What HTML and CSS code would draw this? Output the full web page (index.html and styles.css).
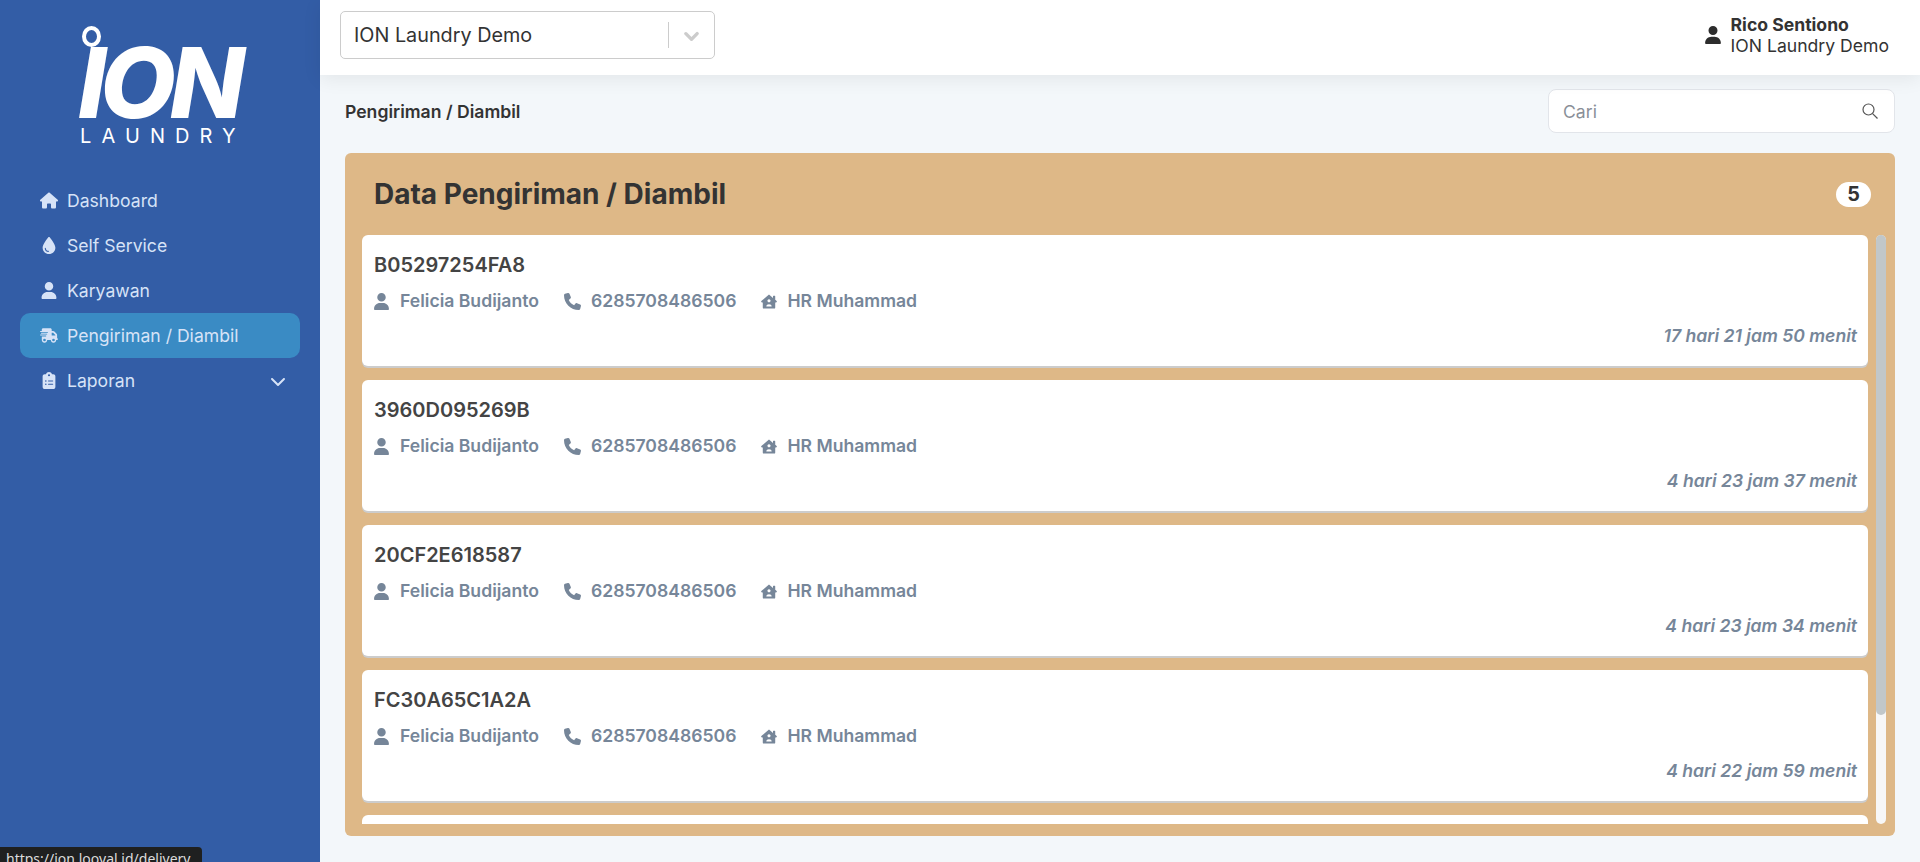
FILE: index.html
```html
<!DOCTYPE html>
<html lang="en">
<head>
    <meta charset="UTF-8">
    <meta name="viewport" content="width=device-width, initial-scale=1.0">
    <title>Pengiriman / Diambil</title>
    <link rel="stylesheet" href="styles.css">
</head>
<body>
    <svg class="sprite" aria-hidden="true">
        <symbol id="i-house" viewBox="0 0 576 512"><path d="M575.8 255.5c0 18-15 32.1-32 32.1h-32l.7 160.2c0 2.7-.2 5.4-.5 8.1V472c0 22.1-17.9 40-40 40H456c-1.1 0-2.2 0-3.3-.1c-1.4 .1-2.8 .1-4.2 .1H416 392c-22.1 0-40-17.9-40-40V448 384c0-17.7-14.3-32-32-32H256c-17.7 0-32 14.3-32 32v64 24c0 22.1-17.9 40-40 40H160 128.1c-1.5 0-3-.1-4.5-.2c-1.2 .1-2.4 .2-3.6 .2H104c-22.1 0-40-17.9-40-40V360c0-.9 0-1.9 .1-2.8V287.6H32c-18 0-32-14-32-32.1c0-9 3-17 10-24L266.4 8c7-7 15-8 22-8s15 2 21 7L564.8 231.5c8 7 12 15 11 24z"/></symbol>
        <symbol id="i-drop" viewBox="0 0 384 512"><path d="M192 512C86 512 0 426 0 320C0 228.8 130.2 57.7 166.6 11.7C172.6 4.2 181.5 0 191.1 0h1.8c9.6 0 18.5 4.2 24.5 11.7C253.8 57.7 384 228.8 384 320c0 106-86 192-192 192zM96 336c0-8.8-7.2-16-16-16s-16 7.2-16 16c0 61.9 50.1 112 112 112c8.8 0 16-7.2 16-16s-7.2-16-16-16c-44.2 0-80-35.8-80-80z"/></symbol>
        <symbol id="i-user" viewBox="0 0 448 512"><path d="M224 256A128 128 0 1 0 224 0a128 128 0 1 0 0 256zm-45.7 48C79.8 304 0 383.8 0 482.3C0 498.7 13.3 512 29.7 512H418.3c16.4 0 29.7-13.3 29.7-29.7C448 383.8 368.2 304 269.7 304H178.3z"/></symbol>
        <symbol id="i-truck" viewBox="0 0 640 512"><path d="M112 0C85.5 0 64 21.5 64 48V96H16c-8.8 0-16 7.2-16 16s7.2 16 16 16H64 272c8.8 0 16 7.2 16 16s-7.2 16-16 16H64 48c-8.8 0-16 7.2-16 16s7.2 16 16 16H64 240c8.8 0 16 7.2 16 16s-7.2 16-16 16H64 16c-8.8 0-16 7.2-16 16s7.2 16 16 16H64 208c8.8 0 16 7.2 16 16s-7.2 16-16 16H64V416c0 53 43 96 96 96s96-43 96-96H384c0 53 43 96 96 96s96-43 96-96h32c17.7 0 32-14.3 32-32s-14.3-32-32-32V288 256 237.3c0-17-6.7-33.3-18.7-45.3L512 114.7c-12-12-28.3-18.7-45.3-18.7H416V48c0-26.5-21.5-48-48-48H112zM544 237.3V256H416V160h50.7L544 237.3zM160 368a48 48 0 1 1 0 96 48 48 0 1 1 0-96zm272 48a48 48 0 1 1 96 0 48 48 0 1 1 -96 0z"/></symbol>
        <symbol id="i-clipboard" viewBox="0 0 384 512"><path d="M192 0c-41.8 0-77.4 26.7-90.5 64H64C28.7 64 0 92.7 0 128V448c0 35.3 28.7 64 64 64H320c35.3 0 64-28.7 64-64V128c0-35.3-28.7-64-64-64H282.5C269.4 26.7 233.8 0 192 0zm0 64a32 32 0 1 1 0 64 32 32 0 1 1 0-64zM72 272a24 24 0 1 1 48 0 24 24 0 1 1 -48 0zm104-16H304c8.8 0 16 7.2 16 16s-7.2 16-16 16H176c-8.8 0-16-7.2-16-16s7.2-16 16-16zM72 368a24 24 0 1 1 48 0 24 24 0 1 1 -48 0zm88 0c0-8.8 7.2-16 16-16H304c8.8 0 16 7.2 16 16s-7.2 16-16 16H176c-8.8 0-16-7.2-16-16z"/></symbol>
        <symbol id="i-chevron" viewBox="0 0 512 512"><path d="M233.4 406.6c12.5 12.5 32.8 12.5 45.3 0l192-192c12.5-12.5 12.5-32.8 0-45.3s-32.8-12.5-45.3 0L256 338.7 86.6 169.4c-12.5-12.5-32.8-12.5-45.3 0s-12.5 32.8 0 45.3l192 192z"/></symbol>
        <symbol id="i-phone" viewBox="0 0 512 512"><path d="M164.9 24.6c-7.7-18.6-28-28.5-47.4-23.2l-88 24C12.1 30.2 0 46 0 64C0 311.4 200.6 512 448 512c18 0 33.8-12.1 38.6-29.5l24-88c5.3-19.4-4.6-39.7-23.2-47.4l-96-40c-16.3-6.8-35.2-2.1-46.3 11.6L304.7 368C234.3 334.7 177.3 277.7 144 207.3L193.3 167c13.7-11.2 18.4-30 11.6-46.3l-40-96z"/></symbol>
        <symbol id="i-house-user" viewBox="0 0 576 512"><path fill-rule="evenodd" d="M288 0L432 126V64c0-9 7-16 16-16h48c9 0 16 7 16 16v132l52 46c16 14 6 46-20 46h-32v192c0 18-14 32-32 32H96c-18 0-32-14-32-32V288H32c-26 0-36-32-20-46zM288 176a56 56 0 1 0 .01 0zM192 432c0-48 40-80 96-80s96 32 96 80z"/></symbol>
    </svg>

    <aside class="sidebar">
        <div class="logo">
            <div class="logo-mark">
                <span class="logo-ring"></span>
                <span class="logo-name">ION</span>
            </div>
            <div class="logo-sub">LAUNDRY</div>
        </div>
        <nav class="menu">
            <a class="menu-item"><svg class="menu-icon"><use href="#i-house"/></svg>Dashboard</a>
            <a class="menu-item"><svg class="menu-icon"><use href="#i-drop"/></svg>Self Service</a>
            <a class="menu-item"><svg class="menu-icon"><use href="#i-user"/></svg>Karyawan</a>
            <a class="menu-item active"><svg class="menu-icon"><use href="#i-truck"/></svg>Pengiriman / Diambil</a>
            <a class="menu-item"><svg class="menu-icon"><use href="#i-clipboard"/></svg>Laporan<svg class="menu-arrow"><use href="#i-chevron"/></svg></a>
        </nav>
    </aside>

    <div class="content">
        <header class="topbar">
            <div class="outlet-select">
                <span class="outlet-name">ION Laundry Demo</span>
                <span class="outlet-sep"></span>
                <svg class="outlet-arrow"><use href="#i-chevron"/></svg>
            </div>
            <div class="account">
                <svg class="account-icon"><use href="#i-user"/></svg>
                <div class="account-text">
                    <strong>Rico Sentiono</strong>
                    <span>ION Laundry Demo</span>
                </div>
            </div>
        </header>

        <main class="page">
            <div class="page-head">
                <div class="crumb">Pengiriman / Diambil</div>
                <div class="search">
                    <span class="search-text">Cari</span>
                    <svg class="search-icon" viewBox="0 0 16 16"><circle cx="6.5" cy="6.5" r="5.5"/><path d="M10.6 10.6L15.5 15.5"/></svg>
                </div>
            </div>

            <section class="panel">
                <div class="panel-head">
                    <h1>Data Pengiriman / Diambil</h1>
                    <span class="badge">5</span>
                </div>
                <div class="panel-body">
                    <div class="list">
                        <article class="order">
                            <div class="order-id">B05297254FA8</div>
                            <div class="order-meta">
                                <span class="meta"><svg class="meta-user"><use href="#i-user"/></svg>Felicia Budijanto</span>
                                <span class="meta"><svg class="meta-phone"><use href="#i-phone"/></svg>6285708486506</span>
                                <span class="meta"><svg class="meta-home"><use href="#i-house-user"/></svg>HR Muhammad</span>
                            </div>
                            <div class="order-time">17 hari 21 jam 50 menit</div>
                        </article>
                        <article class="order">
                            <div class="order-id">3960D095269B</div>
                            <div class="order-meta">
                                <span class="meta"><svg class="meta-user"><use href="#i-user"/></svg>Felicia Budijanto</span>
                                <span class="meta"><svg class="meta-phone"><use href="#i-phone"/></svg>6285708486506</span>
                                <span class="meta"><svg class="meta-home"><use href="#i-house-user"/></svg>HR Muhammad</span>
                            </div>
                            <div class="order-time">4 hari 23 jam 37 menit</div>
                        </article>
                        <article class="order">
                            <div class="order-id">20CF2E618587</div>
                            <div class="order-meta">
                                <span class="meta"><svg class="meta-user"><use href="#i-user"/></svg>Felicia Budijanto</span>
                                <span class="meta"><svg class="meta-phone"><use href="#i-phone"/></svg>6285708486506</span>
                                <span class="meta"><svg class="meta-home"><use href="#i-house-user"/></svg>HR Muhammad</span>
                            </div>
                            <div class="order-time">4 hari 23 jam 34 menit</div>
                        </article>
                        <article class="order">
                            <div class="order-id">FC30A65C1A2A</div>
                            <div class="order-meta">
                                <span class="meta"><svg class="meta-user"><use href="#i-user"/></svg>Felicia Budijanto</span>
                                <span class="meta"><svg class="meta-phone"><use href="#i-phone"/></svg>6285708486506</span>
                                <span class="meta"><svg class="meta-home"><use href="#i-house-user"/></svg>HR Muhammad</span>
                            </div>
                            <div class="order-time">4 hari 22 jam 59 menit</div>
                        </article>
                        <article class="order"></article>
                    </div>
                    <div class="scrollbar"><div class="scrollbar-thumb"></div></div>
                </div>
            </section>
        </main>
    </div>

    <div class="status-link">https://ion.looyal.id/delivery</div>
</body>
</html>
```

FILE: styles.css
```css
* {
    box-sizing: border-box;
}

html, body {
    height: 100%;
}

body {
    margin: 0;
    display: flex;
    height: 862px;
    overflow: hidden;
    font-family: Inter, "Liberation Sans", sans-serif;
    font-size: 17.6px;
    color: #333;
    background-color: #f3f7fa;
}

.sprite {
    display: none;
}

svg {
    fill: currentColor;
    flex: none;
}

/* sidebar */
.sidebar {
    width: 320px;
    flex: none;
    padding: 0 20px;
    background-color: #335da6;
}

.logo {
    height: 178px;
    padding: 26px 0 0 60px;
    color: #fff;
}

.logo-mark {
    position: relative;
    height: 92px;
}

.logo-ring {
    position: absolute;
    left: 2px;
    top: 0;
    width: 19px;
    height: 21px;
    border: 4px solid #fff;
    border-radius: 50%;
}

.logo-name {
    position: absolute;
    left: -2px;
    top: 21px;
    font-size: 98px;
    line-height: 71px;
    font-weight: 800;
    font-style: italic;
    letter-spacing: -6px;
}

.logo-sub {
    margin-top: 6px;
    font-size: 20px;
    line-height: 24px;
    letter-spacing: 10.1px;
}

.menu-item {
    display: flex;
    align-items: center;
    height: 45px;
    padding-left: 20px;
    border-radius: 10px;
    color: #d7e3f7;
}

.menu-item.active {
    background-color: #3a8bc4;
}

.menu-icon {
    width: 18px;
    height: 17px;
    margin-right: 9px;
}

.menu-arrow {
    width: 16px;
    height: 16px;
    margin-left: auto;
    margin-right: 14px;
}

/* top bar */
.content {
    flex: 1;
    display: flex;
    flex-direction: column;
    min-width: 0;
}

.topbar {
    position: relative;
    z-index: 2;
    display: flex;
    align-items: center;
    justify-content: space-between;
    height: 75px;
    padding: 0 31px 0 20px;
    background: #fff;
    box-shadow: 0 4px 18px rgba(0, 0, 0, 0.07);
}

.outlet-select {
    display: flex;
    align-items: center;
    width: 375px;
    height: 48px;
    margin-top: -5px;
    padding: 0 15px 0 13px;
    border: 1px solid #ccc;
    border-radius: 5px;
    color: #333;
}

.outlet-name {
    flex: 1;
    font-size: 19.8px;
}

.outlet-sep {
    width: 1px;
    height: 26px;
    margin-right: 15px;
    background-color: #ccc;
}

.outlet-arrow {
    width: 15px;
    height: 15px;
    stroke: currentColor;
    stroke-width: 50px;
    color: #ccc;
}

.account {
    display: flex;
    align-items: center;
    gap: 10px;
    margin-top: -6px;
}

.account-icon {
    width: 16px;
    height: 18px;
    color: #2d2d2d;
}

.account-text {
    display: flex;
    flex-direction: column;
    line-height: 21px;
}

.account-text strong {
    font-weight: 700;
}

/* page */
.page {
    flex: 1;
    padding: 14px 25px 26px;
    display: flex;
    flex-direction: column;
    min-height: 0;
}

.page-head {
    display: flex;
    align-items: center;
    justify-content: space-between;
    height: 44px;
    margin-bottom: 20px;
}

.crumb {
    font-weight: 600;
}

.search {
    display: flex;
    align-items: center;
    justify-content: space-between;
    width: 347px;
    height: 44px;
    padding: 0 16px 0 14px;
    border: 1px solid #e2e5ea;
    border-radius: 8px;
    background: #fff;
}

.search-text {
    color: #8a8f98;
}

.search-icon {
    width: 16px;
    height: 16px;
    fill: none;
    stroke: #555;
    stroke-width: 1.2;
}

.panel {
    flex: 1;
    display: flex;
    flex-direction: column;
    min-height: 0;
    padding: 0 9px 12px 17px;
    border-radius: 6px;
    background-color: #deb887;
}

.panel-head {
    display: flex;
    align-items: center;
    justify-content: space-between;
    height: 82px;
    padding: 0 15px 0 12px;
}

.panel-head h1 {
    margin: 0;
    font-size: 28px;
    font-weight: 700;
    color: #333;
}

.badge {
    width: 35px;
    height: 25px;
    border-radius: 13px;
    background: #fff;
    font-size: 19.8px;
    font-weight: 700;
    line-height: 25px;
    text-align: center;
}

.panel-body {
    flex: 1;
    display: flex;
    gap: 8px;
    min-height: 0;
}

.list {
    flex: 1;
    min-width: 0;
    overflow: hidden;
}

.scrollbar {
    width: 10px;
    flex: none;
    border-radius: 5px;
    background-color: #f7f7f7;
}

.scrollbar-thumb {
    height: 480px;
    border-radius: 5px;
    background-color: #c1c7c9;
}

.order {
    height: 131px;
    margin-bottom: 14px;
    padding: 18px 11px 0 12px;
    border-radius: 6px;
    background: #fff;
    box-shadow: 0 2px 0 #ccc;
}

.order-id {
    font-size: 20px;
    font-weight: 600;
    line-height: 24px;
    color: #444;
}

.order-meta {
    display: flex;
    gap: 25px;
    margin-top: 13px;
    font-weight: 600;
    line-height: 22px;
    color: #768699;
}

.meta {
    display: flex;
    align-items: center;
}

.meta-user {
    width: 15px;
    height: 17px;
    margin-right: 11px;
}

.meta-phone {
    width: 17px;
    height: 17px;
    margin-right: 10px;
}

.meta-home {
    width: 16px;
    height: 15px;
    margin-right: 10px;
}

.order-time {
    margin-top: 13px;
    font-weight: 600;
    font-style: italic;
    line-height: 22px;
    text-align: right;
    color: #768699;
}

/* browser link preview, bottom left */
.status-link {
    position: fixed;
    left: 0;
    bottom: 0;
    z-index: 5;
    width: 202px;
    height: 15px;
    padding-left: 6px;
    border-top-right-radius: 4px;
    background-color: #1f2020;
    font-family: "Noto Sans", sans-serif;
    font-size: 14px;
    line-height: 24px;
    overflow: hidden;
    white-space: nowrap;
    color: #dcdcdc;
}
```
